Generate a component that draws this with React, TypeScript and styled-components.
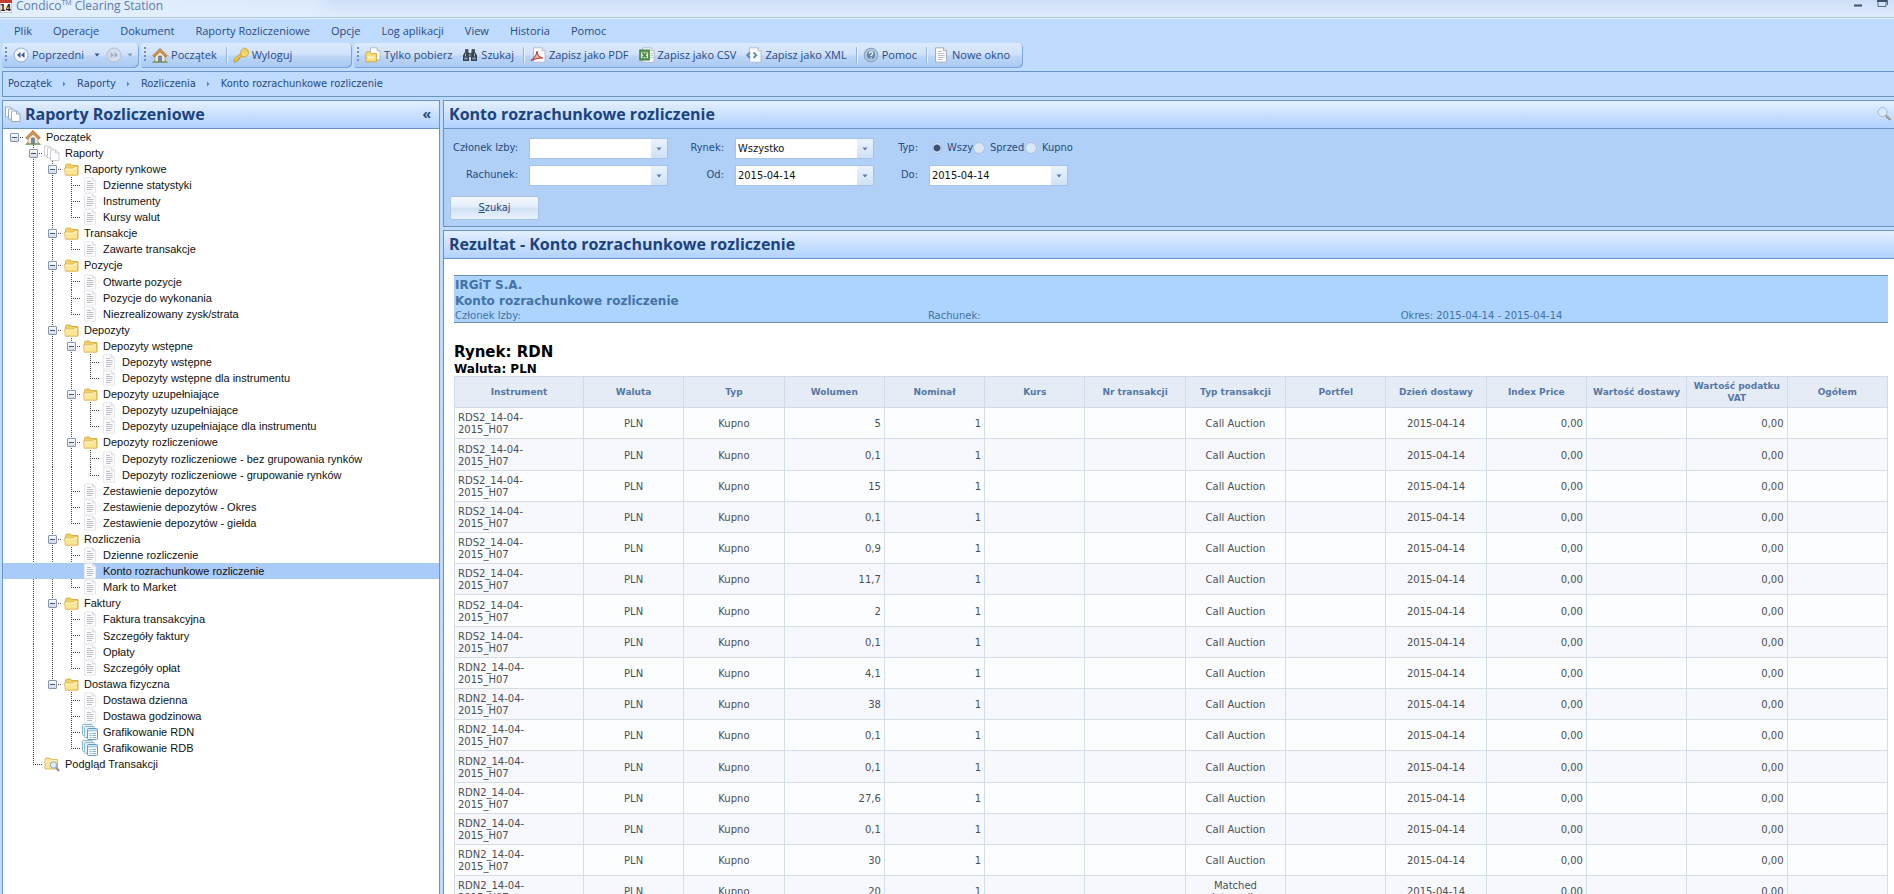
import React from "react";
import styled, { createGlobalStyle, css } from "styled-components";

const ui = `"Open Sans", "Noto Sans", sans-serif`;
const tahoma = `"DejaVu Sans Condensed", "DejaVu Sans", sans-serif`;
const verdana = `"DejaVu Sans", sans-serif`;
const line = "#6a93c6";
const ink = "#274b82";

const Global = createGlobalStyle`
  * { box-sizing: border-box; }
  body { margin: 0; overflow: hidden; background: #bfdbff; font-family: ${ui}; color: ${ink}; }
  button { font: inherit; color: inherit; background: none; border: 0; padding: 0; }
  a { color: inherit; text-decoration: none; }
  svg { display: block; flex: none; }
`;

/* ---------- frame ---------- */

const Window = styled.div`
  display: flex;
  flex-direction: column;
  height: 100vh;
`;

const TitleBar = styled.header`
  display: flex;
  align-items: flex-start;
  height: 18px;
  flex: none;
  overflow: hidden;
  border-bottom: 1px solid #a9c5e6;
  background: linear-gradient(90deg, rgba(228, 240, 254, 0.9) 0, rgba(228, 240, 254, 0.6) 310px, transparent 340px),
    linear-gradient(#cddff8, #dfecfd);
`;

const AppName = styled.h1`
  flex: 1;
  margin: 0 0 0 4px;
  font: 400 12px/11px ${ui};
  color: #5a7bad;
  sup { font-size: 7px; line-height: 0; }
`;

const WindowButton = styled.button`
  width: 24px;
  height: 9px;
  display: flex;
  justify-content: center;
`;

const MenuBar = styled.nav`
  display: flex;
  align-items: center;
  gap: 1px;
  height: 25px;
  flex: none;
  padding-left: 4px;
  border-top: 1px solid #e9f3ff;
`;

const MenuItem = styled.button`
  padding: 0 10px;
  font: 400 11px/18px ${ui};
`;

const ToolStrip = styled.div`
  display: flex;
  gap: 2px;
  height: 28px;
  flex: none;
  padding: 0 0 3px 2px;
`;

const ToolGroup = styled.div<{ $min?: number }>`
  display: flex;
  align-items: center;
  padding: 0 0 2px 3px;
  min-width: ${(p) => p.$min ?? 0}px;
  border-radius: 3px 5px 5px 3px;
  background: linear-gradient(#dceafd, #cfe1fb 48%, #bdd6f8 52%, #a9c9f2);
  box-shadow: inset -1px -1px 0 #7fa5d8;
  &:last-child { padding-right: 8px; }
`;

const Grip = styled.span`
  width: 3px;
  height: 15px;
  background: repeating-linear-gradient(#6d8fc0 0 2px, transparent 2px 4px);
  background-size: 2px 100%;
  background-repeat: no-repeat;
`;

const Tool = styled.button`
  display: flex;
  align-items: center;
  gap: 3px;
  padding: 0 5px;
  height: 23px;
  white-space: nowrap;
  font: 400 11px/18px ${ui};
`;

const CaretTool = styled.button<{ $dim?: boolean }>`
  display: flex;
  padding: 0 6px 0 5px;
  opacity: ${(p) => (p.$dim ? 0.5 : 1)};
`;

const Divider = styled.span`
  width: 1px;
  height: 16px;
  margin: 0 1px 0 4px;
  background: #94b3de;
  box-shadow: 1px 0 0 #eef5ff;
`;

const Breadcrumb = styled.nav`
  display: flex;
  align-items: center;
  gap: 10px;
  height: 26px;
  flex: none;
  margin: 0 0 3px 2px;
  padding: 0 0 1px 5px;
  border: 1px solid ${line};
  border-right: 0;
  font: 400 11px/16px ${tahoma};
`;

const Workspace = styled.div`
  display: grid;
  grid-template-columns: 438px minmax(0, 1fr);
  gap: 3px;
  flex: 1;
  min-height: 0;
  padding-left: 2px;
`;

const Sidebar = styled.aside`
  display: flex;
  flex-direction: column;
  min-height: 0;
  border: 1px solid ${line};
  border-bottom: 0;
  background: #fff;
`;

const MainColumn = styled.main`
  display: flex;
  flex-direction: column;
  gap: 3px;
  min-height: 0;
`;

const Panel = styled.section<{ $fill?: boolean }>`
  display: flex;
  flex-direction: column;
  min-height: 0;
  border: 1px solid ${line};
  border-right: 0;
  background: ${(p) => (p.$fill ? "#fff" : "#b0d0f7")};
  ${(p) =>
    p.$fill
      ? css`
          flex: 1;
          border-bottom: 0;
        `
      : css`
          flex: none;
        `}
`;

const PanelHead = styled.div`
  display: flex;
  align-items: center;
  gap: 4px;
  height: 28px;
  flex: none;
  padding: 0 2px 2px;
  border-bottom: 1px solid ${line};
  background: linear-gradient(#e4f0ff, #cde2ff 45%, #b0d2ff);
`;

const PanelTitle = styled.h2`
  flex: 1;
  margin: 0;
  font: 700 16px/24px ${ui};
  color: #1c437e;
`;

const MainTitle = styled(PanelTitle)`
  padding-left: 3px;
`;

const Collapse = styled.button`
  padding-right: 6px;
  font: 700 14px/18px ${ui};
`;

/* ---------- tree ---------- */

const Tree = styled.ul`
  flex: 1;
  min-height: 0;
  overflow: auto;
  scrollbar-width: none;
  margin: 0;
  padding: 0;
  list-style: none;
  font: 400 11px/16px "Liberation Sans", Arial, sans-serif;
  color: #111;
`;

const TreeRow = styled.li<{ $selected?: boolean }>`
  display: flex;
  align-items: center;
  height: 16px;
  padding-left: 2px;
  background: ${(p) => (p.$selected ? "#a9cbfa" : "none")};
  &:nth-child(11n + 10) { height: 17px; }
`;

const dotsDown = "repeating-linear-gradient(#444 0 1px, transparent 1px 2px)";
const dotsAcross = "repeating-linear-gradient(90deg, #444 0 1px, transparent 1px 2px)";

type Rail = "none" | "through" | "tee" | "end" | "stub";

const RailCell = styled.span<{ $rail: Rail }>`
  display: flex;
  align-items: center;
  justify-content: center;
  width: 19px;
  height: 100%;
  flex: none;
  background-repeat: no-repeat;
  ${(p) => p.$rail === "through" && css`background-image: ${dotsDown}; background-size: 1px 100%; background-position: 9px 0;`}
  ${(p) => p.$rail === "stub" && css`background-image: ${dotsAcross}; background-size: 10px 1px; background-position: 9px 8px;`}
  ${(p) => p.$rail === "tee" && css`background-image: ${dotsDown}, ${dotsAcross}; background-size: 1px 100%, 10px 1px; background-position: 9px 0, 9px 8px;`}
  ${(p) => p.$rail === "end" && css`background-image: ${dotsDown}, ${dotsAcross}; background-size: 1px 9px, 10px 1px; background-position: 9px 0, 9px 8px;`}
`;

const Expander = styled.button`
  width: 9px;
  height: 9px;
  border: 1px solid #8496b0;
  border-radius: 1px;
  background: linear-gradient(#3a5583, #3a5583) center / 5px 1px no-repeat, linear-gradient(#fff, #d5d9e2);
`;

const NodeLink = styled.a`
  display: flex;
  align-items: center;
  gap: 5px;
  padding-left: 1px;
  white-space: nowrap;
`;

/* ---------- form ---------- */

const Form = styled.form`
  padding: 9px 6px 6px;
  font: 400 11px/16px ${tahoma};
  display: flex;
  flex-direction: column;
  align-items: flex-start;
  gap: 10px;
`;

const Fields = styled.div`
  display: grid;
  grid-template-columns: 68px 139px 45px 139px 33px auto;
  grid-auto-rows: 21px;
  gap: 6px 11px;
  align-items: center;
`;

const FieldLabel = styled.label`
  justify-self: end;
  padding-bottom: 2px;
  white-space: nowrap;
`;

const Combo = styled.span`
  display: grid;
  width: 139px;
  height: 21px;
  > * { grid-area: 1 / 1; }
`;

const control = css`
  appearance: none;
  width: 100%;
  height: 21px;
  min-width: 0;
  padding: 0 16px 0 2px;
  border: 1px solid #a6c3e6;
  border-radius: 0;
  background: #fff;
  color: #111;
  font: 400 11px/16px ${tahoma};
`;
const Select = styled.select`${control}`;
const DateInput = styled.input`${control}`;

const DropMark = styled.span`
  justify-self: end;
  align-self: center;
  display: flex;
  align-items: center;
  justify-content: center;
  width: 16px;
  height: 19px;
  margin-right: 1px;
  background: linear-gradient(#eaf3fe, #cfe1f6);
  pointer-events: none;
`;

const Radios = styled.div`
  display: grid;
  grid-template-columns: 41px 52px auto;
  padding: 0 0 2px 3px;
`;

const RadioLabel = styled.label`
  display: flex;
  align-items: center;
  gap: 5px;
`;

const Radio = styled.input`
  appearance: none;
  width: 12px;
  height: 12px;
  margin: 0;
  border: 1px solid #a9bfdc;
  border-radius: 50%;
  background: #dbe7f5;
  &:checked { background: radial-gradient(circle, #3d5272 0 3px, #e4effc 4px); }
`;

const Submit = styled.button`
  width: 89px;
  height: 24px;
  border: 1px solid #a9c3e4;
  border-radius: 2px;
  background: linear-gradient(#f3f8fe, #e3edfa 46%, #cfe0f3 50%, #e8f2fd);
  &::first-letter { text-decoration: underline; }
`;

/* ---------- report ---------- */

const Report = styled.div`
  flex: 1;
  min-height: 0;
  overflow: auto;
  scrollbar-width: none;
  padding: 16px 6px 0 10px;
  font-family: ${verdana};
`;

const Banner = styled.div`
  display: grid;
  grid-template-columns: 33% 33% 1fr;
  padding: 1px 0 0 1px;
  border: solid #6f8fb2;
  border-width: 1px 0;
  background: #acd4fd;
  color: #4472a8;
  font-size: 10px;
  line-height: 13px;
`;

const BannerTitle = styled.strong`
  grid-column: 1 / -1;
  font-size: 12px;
  line-height: 16px;
`;

const MarketTitle = styled.h3`
  margin: 20px 0 0;
  font-size: 15px;
  line-height: 19px;
  color: #000;
`;

const CurrencyTitle = styled.h4`
  margin: 0;
  font-size: 12px;
  line-height: 14px;
  color: #000;
`;

const Grid = styled.table`
  width: 100%;
  table-layout: fixed;
  border-collapse: collapse;
  font-size: 10px;
  line-height: 12px;
  color: #4a5056;
  tr { height: 31px; }
  tbody tr { background: #fcfdfe; }
  tbody tr:nth-child(even) { background: #f7f8fd; }
  tbody tr:nth-child(5n + 2) { height: 32px; }
`;

const Th = styled.th<{ $wide?: boolean }>`
  width: ${(p) => (p.$wide ? "9%" : "auto")};
  padding: 0 2px;
  border: 1px solid #cfdbe6;
  background: #e6ecf5;
  color: #5577a6;
  font-size: 9px;
  line-height: 12px;
`;

const Td = styled.td<{ $align?: string }>`
  padding: 4px 3px 2px;
  border: 1px solid #d3dde6;
  text-align: ${(p) => p.$align ?? "center"};
`;

/* ---------- icons ---------- */

const Icon = ({ children, w = 16, h = 16 }: { children: React.ReactNode; w?: number; h?: number }) => (
  <svg width={w} height={h} viewBox={`0 0 ${w} ${h}`} fill="none" aria-hidden="true">
    {children}
  </svg>
);

const Caret = ({ color = "#35507c" }: { color?: string }) => (
  <Icon w={6} h={4}><path d="M0.5 0.5h5L3 3.5z" fill={color} /></Icon>
);

const HomeIcon = () => (
  <Icon>
    <path d="M0.5 15.5h15l-2-2h-11z" fill="#86b46a" stroke="#5f9150" strokeWidth=".6" />
    <path d="M3 8l5-5 5 5v6.5H3z" fill="#f1e6d6" stroke="#a98c6c" strokeWidth=".7" />
    <path d="M0.8 8.8L8 1.5l7.2 7.3-1.6 1.2L8 4.6 2.4 10z" fill="#d99a50" stroke="#99602a" strokeWidth=".8" />
    <path d="M6.5 9h3v5.5h-3z" fill="#6f8fa3" stroke="#4d6472" strokeWidth=".5" />
  </Icon>
);

const FolderIcon = () => (
  <Icon>
    <path d="M2.5 14V4.5l1-1.5h4l1 1.5h6.5V14z" fill="#f3cf62" stroke="#d3a93e" strokeWidth=".9" />
    <path d="M1.5 7h9l1-1.5h3V14H2.2z" fill="#fbe695" stroke="#dfba55" strokeWidth=".8" />
    <path d="M2.5 8.2h8.6l1-1.4h2" stroke="#fff8d6" strokeWidth=".8" />
  </Icon>
);

const PageIcon = ({ strong }: { strong?: boolean }) => (
  <Icon>
    <path d="M2.5.8h8l3 3v11.4h-11z" fill="#fdfdfe" stroke={strong ? "#a3adbb" : "#e6e8ec"} />
    <path d="M10.5.8v3h3" fill="#eceef2" stroke={strong ? "#a3adbb" : "#d9dce1"} />
    <path d="M5 4.5h4M5 6.5h6.5M5 8.5h6.5M5 10.5h6.5M5 12.5h5" stroke="#bbbfc6" />
  </Icon>
);

const PagesIcon = ({ pale }: { pale?: boolean }) => {
  const c = pale ? "#c9ccd3" : "#9aa9c0";
  return (
    <Icon>
      <path d="M.5 1h5l1 1v9h-6z" fill="#fff" stroke={c} />
      <path d="M3.5 3h5l1.5 1.5v8.5h-6.5z" fill="#fff" stroke={c} />
      <path d="M6.5 5h5l3.5 3v7.5h-8.5z" fill="#fff" stroke={c} />
      <path d="M11.5 5v3h3.5" stroke={c} />
    </Icon>
  );
};

const SheetsIcon = () => (
  <Icon>
    <rect x=".5" y=".5" width="10" height="11" rx="1" fill="#e4f1fa" stroke="#8fb6cf" />
    <rect x="2.5" y="2.5" width="10" height="11" rx="1" fill="#e4f1fa" stroke="#8fb6cf" />
    <rect x="5.5" y="4.5" width="10" height="11" rx="1" fill="#f6fbff" stroke="#639bbe" />
    <path d="M6 6.5h9" stroke="#a5cfe8" strokeWidth="2" />
    <path d="M7.5 9.5h2M10.5 9.5h3.5M7.5 11.5h2M10.5 11.5h3.5M7.5 13.5h2M10.5 13.5h3.5" stroke="#86b0cd" />
  </Icon>
);

const FolderSearchIcon = () => (
  <Icon>
    <path d="M1 13V3.5l1-1.5h4l1 1.5h6.5V13z" fill="#fae39a" stroke="#d9b75a" strokeWidth=".9" />
    <path d="M1.5 5h11.5" stroke="#fff6d2" />
    <circle cx="9.5" cy="9" r="3.2" fill="#dcebf7" stroke="#9aabbd" />
    <path d="M12 11.5l3.2 3.5" stroke="#8592a6" strokeWidth="2" />
  </Icon>
);

const RoundArrow = ({ forward }: { forward?: boolean }) => (
  <Icon>
    <circle cx="8" cy="8" r="7" fill={forward ? "#d5dfec" : "#f2f7fd"} stroke={forward ? "#b1bfd3" : "#8fabd2"} />
    {forward ? (
      <path d="M4.5 5v6L8 8zM8.5 5v6L12 8z" fill="#a3b0c4" />
    ) : (
      <path d="M7.5 5v6L4 8zM11.5 5v6L8 8z" fill="#3f5c88" />
    )}
  </Icon>
);

const KeyIcon = () => (
  <Icon>
    <path d="M1 15v-2.5L7.5 6.5l2 2L7.5 10.5 6.5 10.5v1.5H5v1.5H3.5L3 15z" fill="#f4cc45" stroke="#b98a1c" strokeWidth=".8" />
    <path d="M8 3.5l3-2.7 4 2.2.4 4-3.4 3.2-4-1.2z" fill="#fbdc68" stroke="#c09526" strokeWidth=".8" />
    <circle cx="12" cy="4.2" r="1.1" fill="#fff7d8" stroke="#b98a1c" strokeWidth=".5" />
  </Icon>
);

const DownloadIcon = () => (
  <Icon>
    <path d="M5.5.8h6.5l3 3v9h-9.5z" fill="#fff" stroke="#a5afbf" strokeWidth=".8" />
    <path d="M12 .8v3h3" fill="#eceff4" stroke="#a5afbf" strokeWidth=".8" />
    <path d="M.8 14.8V6l.8-1.2h3.2L6 6.5h5.5v8.3z" fill="#f9dc74" stroke="#c79f36" strokeWidth=".8" />
    <path d="M3 10.5h6.5" stroke="#fff6cc" strokeWidth="2" />
  </Icon>
);

const BinocularsIcon = () => (
  <Icon>
    <rect x="3" y="2" width="3.5" height="4" rx="1" fill="#4a525e" />
    <rect x="9.5" y="2" width="3.5" height="4" rx="1" fill="#4a525e" />
    <path d="M2.5 5.5h4.5v8.5H1V8.5zM13.5 5.5H9v8.5h6V8.5z" fill="#39414d" />
    <rect x="6.5" y="6" width="3" height="4" fill="#4f5967" />
    <path d="M3.5 6.5v3M12.5 6.5v3M8 7v2" stroke="#a9b7c9" />
    <path d="M2.2 11.5h3.5M10.3 11.5h3.5" stroke="#8b9bb0" strokeWidth="2" />
  </Icon>
);

const Sheet = ({ children }: { children: React.ReactNode }) => (
  <Icon>
    <path d="M3.5.8h8.5l3 3v11.4H3.5z" fill="#fdfdff" stroke="#a7b0bf" strokeWidth=".8" />
    <path d="M12 .8v3h3" fill="#e8ecf2" stroke="#a7b0bf" strokeWidth=".8" />
    {children}
  </Icon>
);

const PdfIcon = () => (
  <Sheet>
    <path d="M.8 13.5c3-1.5 6-6 6.2-9.5.2 4 2.5 6.5 6 7-4-.3-8 .5-12.2 2.5z" fill="#e9b5a8" stroke="#b8402f" strokeWidth="1.1" />
  </Sheet>
);

const CsvIcon = () => (
  <Sheet>
    <rect x=".8" y="3" width="9.5" height="10" fill="#5f9d55" stroke="#3f7a39" />
    <rect x="2" y="5.5" width="7" height="5.5" fill="#d9ecd3" />
    <path d="M3.5 6l4 4.5M7.5 6l-4 4.5" stroke="#3f7a39" strokeWidth="1.4" />
    <path d="M11.5 6.5h2.5M11.5 8.5h2.5M11.5 10.5h2.5" stroke="#a9cfa2" />
  </Sheet>
);

const XmlIcon = () => (
  <Sheet>
    <path d="M4 5.5L1.2 8.2 4 11M7.5 5.5l2.8 2.7L7.5 11" stroke="#5789bd" strokeWidth="1.8" />
  </Sheet>
);

const HelpIcon = () => (
  <Icon>
    <circle cx="8" cy="8" r="6.8" fill="#a9c1da" stroke="#7f9dbf" />
    <circle cx="8" cy="8" r="4.9" fill="#6488b0" stroke="#dbe7f3" strokeWidth=".8" />
    <path d="M6.2 6.6c.1-2.2 3.6-2.2 3.6 0 0 1.2-1.8 1.2-1.8 2.5M8 10.3v1.2" stroke="#fff" strokeWidth="1.3" />
  </Icon>
);

const SearchIcon = () => (
  <Icon>
    <circle cx="6.5" cy="6" r="4.5" fill="#d9ebfd" stroke="#a3b9d2" />
    <path d="M10 9.5l4.3 4.3" stroke="#8a8272" strokeWidth="2.2" />
    <path d="M10.5 9.5l3.5 3.5" stroke="#e7dcc0" strokeWidth=".7" />
  </Icon>
);

const CalendarIcon = () => (
  <svg width="12" height="13" viewBox="0 0 12 13" aria-hidden="true">
    <rect width="12" height="13" fill="#fff" stroke="#8f9bb0" />
    <rect width="12" height="3" fill="#c63b30" />
    <text x="0" y="11" fontFamily="DejaVu Sans" fontWeight="700" fontSize="8" fill="#222">14</text>
  </svg>
);

const Chevron = () => <Icon w={5} h={6}><path d="M1 .5v5L3.5 3z" fill="#5d82b8" /></Icon>;

/* ---------- data ---------- */

const menu = ["Plik", "Operacje", "Dokument", "Raporty Rozliczeniowe", "Opcje", "Log aplikacji", "View", "Historia", "Pomoc"];
const trail = ["Początek", "Raporty", "Rozliczenia", "Konto rozrachunkowe rozliczenie"];

type Kind = "home" | "pages" | "folder" | "page" | "sheets" | "search";
type Node = { name: string; kind: Kind; children?: Node[] };

const folder = (name: string, children: Node[]): Node => ({ name, kind: "folder", children });
const page = (name: string): Node => ({ name, kind: "page" });

const root: Node = {
  name: "Początek",
  kind: "home",
  children: [
    {
      name: "Raporty",
      kind: "pages",
      children: [
        folder("Raporty rynkowe", [page("Dzienne statystyki"), page("Instrumenty"), page("Kursy walut")]),
        folder("Transakcje", [page("Zawarte transakcje")]),
        folder("Pozycje", [page("Otwarte pozycje"), page("Pozycje do wykonania"), page("Niezrealizowany zysk/strata")]),
        folder("Depozyty", [
          folder("Depozyty wstępne", [page("Depozyty wstępne"), page("Depozyty wstępne dla instrumentu")]),
          folder("Depozyty uzupełniające", [page("Depozyty uzupełniające"), page("Depozyty uzupełniające dla instrumentu")]),
          folder("Depozyty rozliczeniowe", [
            page("Depozyty rozliczeniowe - bez grupowania rynków"),
            page("Depozyty rozliczeniowe - grupowanie rynków"),
          ]),
          page("Zestawienie depozytów"),
          page("Zestawienie depozytów - Okres"),
          page("Zestawienie depozytów - giełda"),
        ]),
        folder("Rozliczenia", [page("Dzienne rozliczenie"), page("Konto rozrachunkowe rozliczenie"), page("Mark to Market")]),
        folder("Faktury", [page("Faktura transakcyjna"), page("Szczegóły faktury"), page("Opłaty"), page("Szczegóły opłat")]),
        folder("Dostawa fizyczna", [
          page("Dostawa dzienna"),
          page("Dostawa godzinowa"),
          { name: "Grafikowanie RDN", kind: "sheets" },
          { name: "Grafikowanie RDB", kind: "sheets" },
        ]),
      ],
    },
    { name: "Podgląd Transakcji", kind: "search" },
  ],
};

type FlatRow = { node: Node; rails: Rail[] };

const flatten = (node: Node, above: Rail[], own: Rail, isLast: boolean): FlatRow[] => {
  const below: Rail[] = [...above, isLast ? "none" : "through"];
  const kids = node.children ?? [];
  return [
    { node, rails: [...above, own] },
    ...kids.flatMap((kid, i) => {
      const last = i === kids.length - 1;
      return flatten(kid, below, last ? "end" : "tee", last);
    }),
  ];
};

const treeRows = flatten(root, [], "stub", true);
const selected = "Konto rozrachunkowe rozliczenie";

const icons: Record<Kind, React.ReactNode> = {
  home: <HomeIcon />,
  pages: <PagesIcon pale />,
  folder: <FolderIcon />,
  page: <PageIcon />,
  sheets: <SheetsIcon />,
  search: <FolderSearchIcon />,
};

const columns = [
  "Instrument", "Waluta", "Typ", "Wolumen", "Nominał", "Kurs", "Nr transakcji", "Typ transakcji",
  "Portfel", "Dzień dostawy", "Index Price", "Wartość dostawy", "Wartość podatku VAT", "Ogółem",
];

const volumes = ["5", "0,1", "15", "0,1", "0,9", "11,7", "2", "0,1", "4,1", "38", "0,1", "0,1", "27,6", "0,1", "30", "20"];
const trades = volumes.map((volume, i) => ({
  volume,
  series: i < 8 ? "RDS2" : "RDN2",
  kind: i === 15 ? "Matched Internally" : "Call Auction",
}));

/* ---------- parts ---------- */

const ComboSelect = ({ id, value }: { id: string; value: string }) => (
  <Combo>
    <Select id={id} defaultValue={value}>
      <option>{value}</option>
    </Select>
    <DropMark><Caret color="#5f7ea8" /></DropMark>
  </Combo>
);

const DateBox = ({ id, value }: { id: string; value: string }) => (
  <Combo>
    <DateInput id={id} type="text" defaultValue={value} />
    <DropMark><Caret color="#5f7ea8" /></DropMark>
  </Combo>
);

export default function App() {
  return (
    <Window>
      <Global />
      <TitleBar>
        <CalendarIcon />
        <AppName>Condico<sup>TM</sup> Clearing Station</AppName>
        <WindowButton aria-label="Minimalizuj">
          <Icon w={8} h={9}><path d="M0 5.5h8" stroke="#3f5068" strokeWidth="2" /></Icon>
        </WindowButton>
        <WindowButton aria-label="Przywróć">
          <Icon w={11} h={9}>
            <path d="M1 0v6.5h8V0M10.5 0v5" stroke="#5b6c86" />
            <path d="M0 1h10" stroke="#3f5068" strokeWidth="2" />
          </Icon>
        </WindowButton>
      </TitleBar>

      <MenuBar aria-label="Menu">
        {menu.map((m) => <MenuItem key={m}>{m}</MenuItem>)}
      </MenuBar>

      <ToolStrip role="toolbar">
        <ToolGroup $min={135}>
          <Grip />
          <Tool><RoundArrow />Poprzedni</Tool>
          <CaretTool aria-label="Lista poprzednich"><Caret /></CaretTool>
          <RoundArrow forward />
          <CaretTool $dim aria-label="Lista następnych"><Caret /></CaretTool>
        </ToolGroup>
        <ToolGroup $min={211}>
          <Grip />
          <Tool><HomeIcon />Początek</Tool>
          <Divider />
          <Tool><KeyIcon />Wyloguj</Tool>
        </ToolGroup>
        <ToolGroup>
          <Grip />
          <Tool><DownloadIcon />Tylko pobierz</Tool>
          <Tool><BinocularsIcon />Szukaj</Tool>
          <Divider />
          <Tool><PdfIcon />Zapisz jako PDF</Tool>
          <Tool><CsvIcon />Zapisz jako CSV</Tool>
          <Tool><XmlIcon />Zapisz jako XML</Tool>
          <Divider />
          <Tool><HelpIcon />Pomoc</Tool>
          <Divider />
          <Tool><PageIcon strong />Nowe okno</Tool>
        </ToolGroup>
      </ToolStrip>

      <Breadcrumb aria-label="Ścieżka">
        {trail.map((t, i) => (
          <React.Fragment key={t}>
            {i > 0 && <Chevron />}
            <a href="#">{t}</a>
          </React.Fragment>
        ))}
      </Breadcrumb>

      <Workspace>
        <Sidebar>
          <PanelHead>
            <PagesIcon />
            <PanelTitle>Raporty Rozliczeniowe</PanelTitle>
            <Collapse aria-label="Zwiń panel">«</Collapse>
          </PanelHead>
          <Tree>
            {treeRows.map(({ node, rails }, i) => (
              <TreeRow key={i} $selected={node.name === selected}>
                {rails.map((rail, level) => (
                  <RailCell key={level} $rail={node.name === selected ? "none" : rail}>
                    {level === rails.length - 1 && node.children && <Expander aria-label={`Zwiń: ${node.name}`} />}
                  </RailCell>
                ))}
                <NodeLink href="#">{icons[node.kind]}{node.name}</NodeLink>
              </TreeRow>
            ))}
          </Tree>
        </Sidebar>

        <MainColumn>
          <Panel>
            <PanelHead>
              <MainTitle>Konto rozrachunkowe rozliczenie</MainTitle>
              <SearchIcon />
            </PanelHead>
            <Form onSubmit={(e) => e.preventDefault()}>
              <Fields>
                <FieldLabel htmlFor="member">Członek Izby:</FieldLabel>
                <ComboSelect id="member" value="" />
                <FieldLabel htmlFor="market">Rynek:</FieldLabel>
                <ComboSelect id="market" value="Wszystko" />
                <FieldLabel as="span" id="side">Typ:</FieldLabel>
                <Radios role="radiogroup" aria-labelledby="side">
                  {["Wszy", "Sprzed", "Kupno"].map((r, i) => (
                    <RadioLabel key={r}>
                      <Radio type="radio" name="side" defaultChecked={i === 0} />
                      {r}
                    </RadioLabel>
                  ))}
                </Radios>
                <FieldLabel htmlFor="account">Rachunek:</FieldLabel>
                <ComboSelect id="account" value="" />
                <FieldLabel htmlFor="from">Od:</FieldLabel>
                <DateBox id="from" value="2015-04-14" />
                <FieldLabel htmlFor="to">Do:</FieldLabel>
                <DateBox id="to" value="2015-04-14" />
              </Fields>
              <Submit type="submit">Szukaj</Submit>
            </Form>
          </Panel>

          <Panel $fill>
            <PanelHead>
              <MainTitle>Rezultat - Konto rozrachunkowe rozliczenie</MainTitle>
            </PanelHead>
            <Report>
              <Banner>
                <BannerTitle>IRGiT S.A.</BannerTitle>
                <BannerTitle>Konto rozrachunkowe rozliczenie</BannerTitle>
                <span>Członek Izby:</span>
                <span>Rachunek:</span>
                <span>Okres: 2015-04-14 - 2015-04-14</span>
              </Banner>
              <MarketTitle>Rynek: RDN</MarketTitle>
              <CurrencyTitle>Waluta: PLN</CurrencyTitle>
              <Grid>
                <thead>
                  <tr>{columns.map((c, i) => <Th key={c} $wide={i === 0}>{c}</Th>)}</tr>
                </thead>
                <tbody>
                  {trades.map((t, i) => (
                    <tr key={i}>
                      <Td $align="left">{t.series}_14-04-<br />2015_H07</Td>
                      <Td>PLN</Td>
                      <Td>Kupno</Td>
                      <Td $align="right">{t.volume}</Td>
                      <Td $align="right">1</Td>
                      <Td />
                      <Td />
                      <Td>{t.kind}</Td>
                      <Td />
                      <Td>2015-04-14</Td>
                      <Td $align="right">0,00</Td>
                      <Td />
                      <Td $align="right">0,00</Td>
                      <Td />
                    </tr>
                  ))}
                </tbody>
              </Grid>
            </Report>
          </Panel>
        </MainColumn>
      </Workspace>
    </Window>
  );
}
